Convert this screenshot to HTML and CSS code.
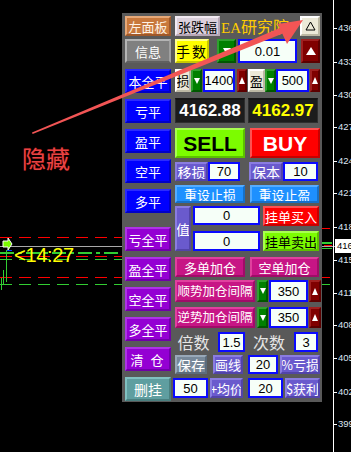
FILE: index.html
```html
<!DOCTYPE html>
<html>
<head>
<meta charset="utf-8">
<link rel="stylesheet" href="styles.css">
</head>
<body>
<svg class="chart" width="351" height="452" viewBox="0 0 351 452">
  <line x1="0" y1="237.5" x2="122" y2="237.5" stroke="#ff0000" stroke-width="1" stroke-dasharray="12 7"/>
  <line x1="0" y1="246.5" x2="122" y2="246.5" stroke="#a8a8a8" stroke-width="1"/>
  <line x1="0" y1="253" x2="122" y2="253" stroke="#32cd32" stroke-width="2" stroke-dasharray="14 4 4 4"/>
  <line x1="0" y1="256.5" x2="122" y2="256.5" stroke="#ff0000" stroke-width="1" stroke-dasharray="12 7"/>
  <line x1="0" y1="259.5" x2="122" y2="259.5" stroke="#32cd32" stroke-width="1" stroke-dasharray="12 7"/>
  <line x1="0" y1="277.5" x2="122" y2="277.5" stroke="#ff0000" stroke-width="1" stroke-dasharray="12 7"/>
  <line x1="0" y1="284.5" x2="122" y2="284.5" stroke="#32cd32" stroke-width="1" stroke-dasharray="12 7"/>
  <line x1="6.5" y1="250" x2="6.5" y2="282" stroke="#32cd32" stroke-width="1"/>
  <line x1="3.5" y1="270" x2="3.5" y2="284" stroke="#32cd32" stroke-width="1"/>
  <line x1="1.5" y1="278" x2="1.5" y2="290" stroke="#32cd32" stroke-width="1"/>
  <line x1="7" y1="250.5" x2="12" y2="250.5" stroke="#0040ff" stroke-width="1"/>
  <polygon points="3,241 8,241 8,238 12,244 8,250 8,247 3,247" fill="#7cfc00" stroke="#ffffff" stroke-width="1"/>
  <line x1="322" y1="228.5" x2="330" y2="228.5" stroke="#ff0000" stroke-width="1"/>
  <line x1="322" y1="243" x2="332" y2="243" stroke="#32cd32" stroke-width="2"/>
  <line x1="322" y1="246.5" x2="335" y2="246.5" stroke="#a8a8a8" stroke-width="1"/>
  <line x1="324" y1="245.5" x2="332" y2="245.5" stroke="#ff0000" stroke-width="1"/>
  <line x1="322" y1="248.5" x2="332" y2="248.5" stroke="#32cd32" stroke-width="1"/>
  <line x1="322" y1="277.5" x2="330" y2="277.5" stroke="#ff0000" stroke-width="1"/>
  <line x1="322" y1="284.5" x2="330" y2="284.5" stroke="#32cd32" stroke-width="1"/>
  <line x1="333.5" y1="0" x2="333.5" y2="452" stroke="#ffffff" stroke-width="1"/>
  <g stroke="#ffffff" stroke-width="1">
    <line x1="333" y1="28.5" x2="337" y2="28.5"/>
    <line x1="333" y1="62.5" x2="337" y2="62.5"/>
    <line x1="333" y1="95.5" x2="337" y2="95.5"/>
    <line x1="333" y1="127.5" x2="337" y2="127.5"/>
    <line x1="333" y1="161.5" x2="337" y2="161.5"/>
    <line x1="333" y1="193.5" x2="337" y2="193.5"/>
    <line x1="333" y1="227.5" x2="337" y2="227.5"/>
    <line x1="333" y1="260.5" x2="337" y2="260.5"/>
    <line x1="333" y1="293.5" x2="337" y2="293.5"/>
    <line x1="333" y1="325.5" x2="337" y2="325.5"/>
    <line x1="333" y1="358.5" x2="337" y2="358.5"/>
    <line x1="333" y1="392.5" x2="337" y2="392.5"/>
    <line x1="333" y1="424.5" x2="337" y2="424.5"/>
  </g>
</svg>

<div class="hide-label">隐藏</div>
<div class="time-label">&lt;14:27</div>

<div class="axis-label" style="top:22px">4363</div>
<div class="axis-label" style="top:56px">4333</div>
<div class="axis-label" style="top:89px">4303</div>
<div class="axis-label" style="top:121px">4273</div>
<div class="axis-label" style="top:155px">4243</div>
<div class="axis-label" style="top:187px">4213</div>
<div class="axis-label" style="top:221px">4183</div>
<div class="axis-label" style="top:254px">4153</div>
<div class="axis-label" style="top:287px">4113</div>
<div class="axis-label" style="top:319px">4083</div>
<div class="axis-label" style="top:352px">4053</div>
<div class="axis-label" style="top:386px">4023</div>
<div class="axis-label" style="top:418px">3993</div>
<div class="price-tag">4162</div>

<div class="panel">
  <div class="lcol">
    <div class="btn lb orange h20">左面板</div>
    <div class="btn lb gray mt3">信息</div>
    <div class="btn lb blue mt6">本全平</div>
    <div class="btn lb blue mt6">亏平</div>
    <div class="btn lb blue mt6">盈平</div>
    <div class="btn lb blue mt6">空平</div>
    <div class="btn lb blue mt6">多平</div>
    <div class="btn lb violet mt14">亏全平</div>
    <div class="btn lb violet mt6">盈全平</div>
    <div class="btn lb violet mt6">空全平</div>
    <div class="btn lb violet mt6">多全平</div>
    <div class="btn lb violet mt6 spaced">清 仓</div>
    <div class="btn lb cadet mt6 big">删挂</div>
  </div>

  <div class="rcol">
    <div class="row h20">
      <div class="btn w45 thistle dk">张跌幅</div>
      <div class="ea w78 ml1"><span class="ea-latin">EA</span>研究院</div>
      <div class="btn w20 ml1 beige"><svg width="11" height="10" viewBox="0 0 11 10"><polygon points="5.5,1 10,9 1,9" fill="none" stroke="#000" stroke-width="1"/></svg></div>
    </div>

    <div class="row h24 mt3">
      <div class="btn w34 yellow dk big spaced">手数</div>
      <div class="btn w19 ml8 green"><span class="tri-d"></span></div>
      <div class="inp w59 ml2">0.01</div>
      <div class="btn w19 ml4 maroon"><span class="tri-u"></span></div>
    </div>

    <div class="row h23 mt6">
      <div class="btn w16 beige dk">损</div>
      <div class="btn w11 green"><span class="tri-d sm"></span></div>
      <div class="inp w32 ml1">1400</div>
      <div class="btn w10 ml2 maroon"><span class="tri-u sm"></span></div>
      <div class="btn w17 ml1 beige dk">盈</div>
      <div class="btn w11 green"><span class="tri-d sm"></span></div>
      <div class="inp w33">500</div>
      <div class="btn w10 ml1 maroon"><span class="tri-u sm"></span></div>
    </div>

    <div class="row h25 mt6">
      <div class="disp w70">4162.88</div>
      <div class="disp w70 ml3 ask">4162.97</div>
    </div>

    <div class="row h30 mt5">
      <div class="btn w70 lawn trade dkt">SELL</div>
      <div class="btn w70 ml5 red trade">BUY</div>
    </div>

    <div class="row h19 mt4">
      <div class="btn w33 slate big">移损</div>
      <div class="inp w32">70</div>
      <div class="btn w34 ml9 slate big">保本</div>
      <div class="inp w35">10</div>
    </div>

    <div class="row h18 mt4">
      <div class="btn w70 dodger">重设止损</div>
      <div class="btn w69 ml5 dodger">重设止盈</div>
    </div>

    <div class="row h45 mt3">
      <div class="btn w16 slate big">值</div>
      <div class="stack w67 ml2">
        <div class="inp h19">0</div>
        <div class="inp h20 mt6">0</div>
      </div>
      <div class="stack w56 ml3">
        <div class="btn h20 red">挂单买入</div>
        <div class="btn h20 mt5 lawn dk">挂单卖出</div>
      </div>
    </div>

    <div class="row h20 mt6">
      <div class="btn w70 mvr">多单加仓</div>
      <div class="btn w69 ml5 mvr">空单加仓</div>
    </div>

    <div class="row h22 mt3">
      <div class="btn w80 mvr tight">顺势加仓间隔</div>
      <div class="btn w11 ml2 green"><span class="tri-d sm"></span></div>
      <div class="inp w39 ml1">350</div>
      <div class="btn w12 ml1 maroon"><span class="tri-u sm"></span></div>
    </div>

    <div class="row h21 mt5">
      <div class="btn w80 mvr tight">逆势加仓间隔</div>
      <div class="btn w11 ml2 green"><span class="tri-d sm"></span></div>
      <div class="inp w39 ml1">350</div>
      <div class="btn w12 ml1 maroon"><span class="tri-u sm"></span></div>
    </div>

    <div class="row h20 mt4">
      <div class="txt w37">倍数</div>
      <div class="inp w27 ml6">1.5</div>
      <div class="txt w32 ml8">次数</div>
      <div class="inp w24 ml9">3</div>
    </div>

    <div class="row h19 mt3">
      <div class="btn w32 lsg big">保存</div>
      <div class="btn w30 ml6 slate">画线</div>
      <div class="inp w30 ml5">20</div>
      <div class="btn w40 ml2 slate">%亏损</div>
    </div>

    <div class="row h20 mt4">
      <div class="inp w35 mlm2">50</div>
      <div class="btn w33 ml2 slate">+均价</div>
      <div class="inp w35 ml5">20</div>
      <div class="btn w35 ml2 slate">$获利</div>
    </div>
  </div>
</div>

<svg class="overlay" width="351" height="452" viewBox="0 0 351 452">
  <polygon points="32,132.4 32.6,134 284,33 281.6,27.2" fill="#f25555"/>
  <polygon points="303,20 278,24 287,44" fill="#f25555"/>
</svg>
</body>
</html>
```

FILE: styles.css
```css
* {
  box-sizing: border-box;
  margin: 0;
  padding: 0;
}

html, body {
  width: 351px;
  height: 452px;
}

body {
  background: #000;
  overflow: hidden;
  position: relative;
  font-family: "Noto Sans CJK SC", "Liberation Sans", sans-serif;
}

.chart, .overlay {
  position: absolute;
  left: 0;
  top: 0;
}

.overlay {
  pointer-events: none;
}

.hide-label {
  position: absolute;
  left: 22px;
  top: 146px;
  font-size: 24px;
  line-height: 24px;
  color: #e84444;
  text-shadow: 0 0 1px #800000;
}

.time-label {
  position: absolute;
  left: 14px;
  top: 245px;
  font-family: "Liberation Sans", sans-serif;
  font-size: 20px;
  line-height: 20px;
  color: #ffff00;
  letter-spacing: -0.3px;
}

.axis-label {
  position: absolute;
  left: 338px;
  font-family: "Liberation Sans", sans-serif;
  font-size: 9.5px;
  line-height: 12px;
  color: #dde4f0;
  white-space: nowrap;
}

.price-tag {
  position: absolute;
  left: 335px;
  top: 239px;
  width: 20px;
  height: 14px;
  background: #fff;
  color: #000;
  font-family: "Liberation Sans", sans-serif;
  font-size: 9.5px;
  line-height: 14px;
  padding-left: 2px;
  white-space: nowrap;
}

.panel {
  position: absolute;
  left: 122px;
  top: 13px;
  width: 200px;
  height: 389px;
  background: #595959;
  display: flex;
  padding-top: 3px;
}

.lcol {
  width: 46px;
  margin-left: 3px;
  display: flex;
  flex-direction: column;
}

.rcol {
  width: 146px;
  margin-left: 4px;
  display: flex;
  flex-direction: column;
}

.row {
  display: flex;
  flex-shrink: 0;
}

.stack {
  display: flex;
  flex-direction: column;
}

.btn {
  display: flex;
  align-items: center;
  justify-content: center;
  color: #fff;
  font-size: 13px;
  line-height: 1;
  border: 2px solid;
  border-color: rgba(255,255,255,0.28) rgba(0,0,0,0.28) rgba(0,0,0,0.28) rgba(255,255,255,0.28);
  white-space: nowrap;
  overflow: hidden;
  flex-shrink: 0;
}

.lb {
  height: 24px;
  width: 46px;
}

.big { font-size: 14px; }
.spaced { letter-spacing: 2px; }
.tight { font-size: 12.5px; letter-spacing: 0; }
.dk { color: #000; }

.orange { background: #c8783c; border-color: #e6a878 #a05828 #a05828 #e6a878; color: #fdf2e6; }
.gray { background: #808080; border-color: #b4b4b4 #a0a0a0 #606060 #b4b4b4; }
.blue { background: #0000ff; border-color: #2a2aff #0000c8 #0000c8 #2a2aff; }
.violet { background: #9400d3; border-color: #ad33e6 #7000a8 #7000a8 #ad33e6; }
.cadet { background: #5f9ea0; border-color: #80c0c0 #4a8080 #4a8080 #80c0c0; }
.thistle { background: #dcd0dc; border-color: #f2eaf2 #b8a8b8 #b8a8b8 #f2eaf2; }
.beige { background: #ece9d8; border-color: #ffffff #bcb8a4 #bcb8a4 #ffffff; }
.yellow { background: #ffff00; border-color: #ffff90 #c8c800 #c8c800 #ffff90; }
.green { background: #008000; border-color: #30a030 #005800 #005800 #30a030; }
.maroon { background: #800000; border-color: #a02020 #5c0000 #5c0000 #a02020; }
.lawn { background: #7cfc00; border-color: #a8ff50 #5cc000 #5cc000 #a8ff50; }
.red { background: #ff0000; border-color: #ff5050 #c80000 #c80000 #ff5050; }
.slate { background: #6a5acd; border-color: #8a7ce0 #5244a8 #5244a8 #8a7ce0; }
.dodger { background: #1e90ff; border-color: #56acff #1670c8 #1670c8 #56acff; }
.mvr { background: #c71585; border-color: #e0409e #a00c68 #a00c68 #e0409e; }
.lsg { background: #778899; border-color: #98a8b8 #5c6c7c #5c6c7c #98a8b8; }

.trade {
  font-family: "Liberation Sans", sans-serif;
  font-weight: bold;
  font-size: 21px;
}

.dkt { color: #000; }

.ea {
  color: #ffcc00;
  font-size: 16px;
  line-height: 20px;
  white-space: nowrap;
  overflow: hidden;
}

.ea-latin {
  font-family: "Liberation Serif", serif;
  font-size: 15px;
}

.inp {
  display: flex;
  align-items: center;
  justify-content: center;
  background: #f6fff8;
  border: 2px solid #0a0aff;
  color: #000;
  font-family: "Liberation Sans", sans-serif;
  font-size: 13px;
  line-height: 1;
  flex-shrink: 0;
}

.disp {
  display: flex;
  align-items: center;
  justify-content: center;
  background: #1c1c1c;
  border: 1px solid #2e2e2e;
  border-top: 2px solid #141414;
  color: #fff;
  font-family: "Liberation Sans", sans-serif;
  font-weight: bold;
  font-size: 17px;
  flex-shrink: 0;
}

.ask { color: #ffff00; }

.txt {
  display: flex;
  align-items: center;
  justify-content: center;
  color: #e6e6e6;
  font-size: 16px;
  line-height: 1;
  white-space: nowrap;
  flex-shrink: 0;
}

.tri-d {
  width: 0;
  height: 0;
  border-left: 4px solid transparent;
  border-right: 4px solid transparent;
  border-top: 7px solid #fff;
}

.tri-u {
  width: 0;
  height: 0;
  border-left: 5px solid transparent;
  border-right: 5px solid transparent;
  border-bottom: 8px solid #fff;
}

.tri-d.sm {
  border-left-width: 3px;
  border-right-width: 3px;
  border-top-width: 6px;
}

.tri-u.sm {
  border-left-width: 3px;
  border-right-width: 3px;
  border-bottom-width: 7px;
}

.w10 { width: 10px; }
.w11 { width: 11px; }
.w12 { width: 12px; }
.w16 { width: 16px; }
.w17 { width: 17px; }
.w19 { width: 19px; }
.w20 { width: 20px; }
.w24 { width: 24px; }
.w27 { width: 27px; }
.w30 { width: 30px; }
.w32 { width: 32px; }
.w33 { width: 33px; }
.w34 { width: 34px; }
.w35 { width: 35px; }
.w37 { width: 37px; }
.w39 { width: 39px; }
.w40 { width: 40px; }
.w45 { width: 45px; }
.w56 { width: 56px; }
.w59 { width: 59px; }
.w67 { width: 67px; }
.w69 { width: 69px; }
.w70 { width: 70px; }
.w78 { width: 78px; }
.w80 { width: 80px; }

.h18 { height: 18px; }
.h19 { height: 19px; }
.h20 { height: 20px; }
.h21 { height: 21px; }
.h22 { height: 22px; }
.h23 { height: 23px; }
.h24 { height: 24px; }
.h25 { height: 25px; }
.h30 { height: 30px; }
.h45 { height: 45px; }

.ml1 { margin-left: 1px; }
.ml2 { margin-left: 2px; }
.ml3 { margin-left: 3px; }
.ml4 { margin-left: 4px; }
.ml5 { margin-left: 5px; }
.ml6 { margin-left: 6px; }
.ml8 { margin-left: 8px; }
.ml9 { margin-left: 9px; }
.ml10 { margin-left: 10px; }
.mlm2 { margin-left: -2px; }

.mt3 { margin-top: 3px; }
.mt4 { margin-top: 4px; }
.mt5 { margin-top: 5px; }
.mt6 { margin-top: 6px; }
.mt14 { margin-top: 14px; }
```
